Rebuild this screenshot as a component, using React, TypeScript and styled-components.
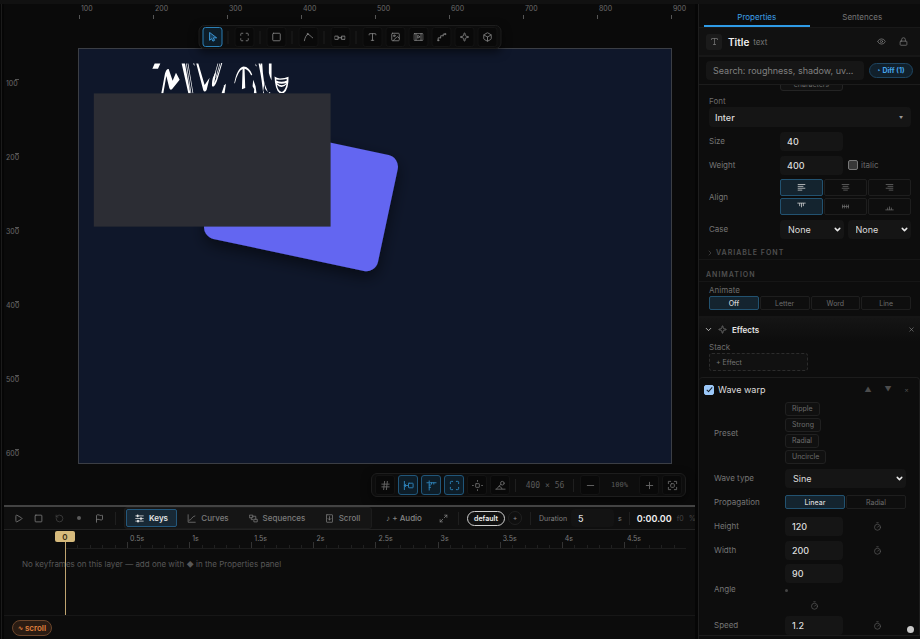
import React from "react";
import styled, { createGlobalStyle, css } from "styled-components";
import {
  Box, ChevronDown, ChevronRight, Eye, Flag, Hash, Image as ImageIcon, Lock, Maximize,
  Maximize2, Minus, Play, Plus, RotateCcw, Sparkle, Square, Timer, Type, X,
} from "lucide-react";

const Global = createGlobalStyle`
  *, *::before, *::after { box-sizing: border-box; }
  html, body { margin: 0; padding: 0; background: #080808; }
  body { font-family: Inter, "Liberation Sans", sans-serif; font-size: 9px; color: #6c6c6c; overflow: hidden; }
  button, input, select { font: inherit; color: inherit; margin: 0; }
  button { cursor: pointer; padding: 0; white-space: nowrap; }
  svg { display: block; flex: none; }
`;

/* ---------- frame ---------- */

const Shell = styled.div`
  display: grid;
  grid-template-columns: minmax(0, 1fr) 222px;
  grid-template-rows: minmax(0, 1fr);
  gap: 0 3px;
  height: 100vh;
  border-top: 4px solid #111;
  background: #060606;
`;

const Main = styled.main`
  display: grid;
  grid-template-rows: minmax(0, 1fr) 134px;
  min-width: 0;
  padding-left: 2px;
  margin-left: 1px;
  border-left: 1px solid #1b1b1b;
`;

const Workspace = styled.section`
  position: relative;
  display: grid;
  grid-template-columns: 75px minmax(0, 1fr) 24px;
  grid-template-rows: 45px minmax(0, 1fr);
  background: #0a0a0a;
`;

const TopRuler = styled.div`
  grid-column: 2;
  display: grid;
  grid-template-columns: repeat(8, minmax(0, 1fr)) 0;
  font-size: 7px;
  line-height: 9px;
  color: #6a6a6a;
`;

const TopMark = styled.span`
  white-space: nowrap;
  padding-left: 2px;
  height: 11px;
  &::after {
    content: "";
    display: block;
    width: 1px;
    height: 4px;
    margin: 2px 0 0 -2px;
    background: #555;
  }
`;

const SideRuler = styled.div`
  grid-column: 1;
  grid-row: 2;
  display: grid;
  grid-auto-rows: 74px;
  align-content: start;
  padding: 30px 0 0 2px;
  font-size: 7px;
  line-height: 8px;
  color: #6a6a6a;
`;

const SideMark = styled.span`
  width: 13px;
  &::before {
    content: "";
    display: block;
    width: 4px;
    height: 1px;
    margin: 0 0 0 9px;
    background: #555;
  }
`;

const Stage = styled.div`
  grid-column: 2;
  grid-row: 2;
  align-self: start;
  margin: -1px -1px 0;
  border: 1px solid #3b3e45;
  background: #0f172a;
  svg { width: 100%; height: auto; }
`;

/* ---------- floating toolbars ---------- */

const FloatBar = styled.div<{ $place: "top" | "bottom" }>`
  position: absolute;
  ${(p) => p.$place === "top"
    ? css`top: 21px; left: 50%; transform: translateX(-50%);`
    : css`bottom: 8px; right: 9px;`}
  display: flex;
  align-items: center;
  gap: 3px;
  padding: 1px 3px;
  border: 1px solid #1d1d1d;
  border-radius: 6px;
  background: #0d0d0d;
  box-shadow: 0 3px 10px rgba(0, 0, 0, 0.55);
`;

const Tool = styled.button<{ $on?: boolean; $dim?: boolean }>`
  display: grid;
  place-items: center;
  width: 20px;
  height: 20px;
  border: 1px solid ${(p) => (p.$on ? (p.$dim ? "#20567a" : "#2b7fb5") : "#131313")};
  border-radius: 3px;
  background: ${(p) => (p.$on ? "#0d1d28" : "#090909")};
  color: ${(p) => (p.$on ? (p.$dim ? "#2f86bd" : "#41a7ee") : p.$dim ? "#686868" : "#858585")};
`;

const Divider = styled.span<{ $m?: number }>`
  flex: none;
  width: 1px;
  height: 13px;
  margin: ${(p) => (p.$m === undefined ? "0 3px 0 2px" : `0 ${p.$m}px`)};
  background: #1f1f1f;
`;

const Readout = styled.span<{ $w: number; $s: number }>`
  width: ${(p) => p.$w}px;
  font: ${(p) => p.$s}px "DejaVu Sans Mono", monospace;
  text-align: center;
  white-space: nowrap;
  color: #5a5a5a;
`;

/* ---------- timeline ---------- */

const Timeline = styled.section`
  display: grid;
  grid-template-rows: 23px 19px minmax(0, 1fr) 24px;
  border-top: 2px solid #434343;
  background: #0c0c0c;
  overflow: hidden;
  position: relative;
`;

const Transport = styled.div`
  display: flex;
  align-items: center;
  background: #0f0f0f;
  border-bottom: 1px solid #222;
  overflow: hidden;
  white-space: nowrap;
  color: #7e7e7e;
`;

const Ghost = styled.button<{ $w: number; $faint?: boolean }>`
  display: flex;
  align-items: center;
  justify-content: center;
  flex: none;
  width: ${(p) => p.$w}px;
  height: 20px;
  border: 0;
  background: none;
  font-size: 8px;
  font-weight: 500;
  color: ${(p) => (p.$faint ? "#444" : "#858585")};
`;

const RecordDot = styled.span`
  width: 4px;
  height: 4px;
  border-radius: 2px;
  background: #5a5a5a;
`;

const ViewTabs = styled.div`
  display: flex;
  flex: none;
  margin-left: 5px;
  padding: 1px;
  border: 1px solid #1c1c1c;
  border-radius: 3px;
  background: #151515;
`;

const ViewTab = styled.button<{ $on?: boolean; $w: number }>`
  display: flex;
  align-items: center;
  justify-content: center;
  gap: 5px;
  width: ${(p) => p.$w}px;
  height: 18px;
  border: 1px solid ${(p) => (p.$on ? "#24587c" : "transparent")};
  border-radius: 2px;
  background: ${(p) => (p.$on ? "#182936" : "none")};
  color: ${(p) => (p.$on ? "#e4e4e4" : "#7c7c7c")};
  font-size: 8px;
  font-weight: ${(p) => (p.$on ? 600 : 500)};
`;

const Scene = styled.button`
  flex: none;
  width: 38px;
  height: 15px;
  border: 1px solid #cfcfcf;
  border-radius: 8px;
  background: #111;
  color: #f0f0f0;
  font-size: 7px;
  font-weight: 600;
`;

const AddScene = styled.button`
  flex: none;
  width: 14px;
  height: 14px;
  margin-left: 3px;
  border: 1px solid #202020;
  border-radius: 7px;
  background: none;
  color: #8a8a8a;
  font-size: 7px;
  line-height: 10px;
`;

const Duration = styled.label`
  display: flex;
  align-items: center;
  flex: none;
  gap: 4px;
  font-size: 7px;
  color: #808080;
`;

const DurationInput = styled.input`
  width: 43px;
  height: 18px;
  padding: 0 7px;
  border: 0;
  border-radius: 4px;
  background: #131313;
  color: #dedede;
  font-size: 9px;
  font-weight: 500;
`;

const Clock = styled.strong`
  padding-right: 5px;
  color: #f2f2f2;
  font-size: 9px;
  font-weight: 600;
`;

const Faint = styled.span`
  padding-right: 5px;
  font-size: 7px;
  color: #444;
  &:last-child { padding: 0; }
`;

const TimeRuler = styled.div`
  display: grid;
  grid-template-columns: repeat(10, minmax(0, 1fr));
  padding: 0 9px 0 61px;
  font-size: 7px;
  color: #7c7c7c;
`;

const TimeCell = styled.div`
  display: grid;
  grid-template-columns: repeat(5, minmax(0, 1fr));
  grid-template-rows: 12px 6px;
  border-bottom: 1px solid #1c1c1c;
`;

const TimeLabel = styled.span`
  grid-column: 1 / -1;
  padding-left: 3px;
  line-height: 18px;
`;

const Tick = styled.i<{ $major?: boolean }>`
  align-self: end;
  width: 1px;
  height: ${(p) => (p.$major ? 6 : 3)}px;
  background: ${(p) => (p.$major ? "#333" : "#202020")};
`;

const Empty = styled.p`
  margin: 0;
  padding: 8px 18px;
  font-size: 8px;
  line-height: 14px;
  color: #585858;
  small { font-size: 7px; }
`;

const Playhead = styled.div`
  position: absolute;
  top: 23px;
  bottom: 24px;
  left: 51px;
  width: 21px;
  display: flex;
  flex-direction: column;
  align-items: center;
  &::after {
    content: "";
    flex: 1;
    width: 1px;
    background: #bfa470;
  }
`;

const PlayheadTag = styled.span`
  align-self: flex-start;
  width: 20px;
  height: 11px;
  margin-top: 1px;
  border-radius: 2px;
  background: #d6ba7c;
  color: #3a2e14;
  font-size: 8px;
  font-weight: 600;
  line-height: 12px;
  text-align: center;
`;

const TimelineFoot = styled.div`
  display: flex;
  align-items: center;
  padding-left: 8px;
  border-top: 1px solid #171717;
`;

const ScrollPill = styled.button`
  display: flex;
  align-items: center;
  justify-content: center;
  gap: 2px;
  width: 40px;
  height: 16px;
  border: 1px solid #6b452b;
  border-radius: 8px;
  background: #2a1c13;
  color: #e0803e;
  font-size: 8px;
  font-weight: 600;
  span { font-size: 6px; }
`;

/* ---------- properties panel ---------- */

const Panel = styled.aside`
  display: grid;
  grid-template-columns: minmax(0, 1fr);
  grid-template-rows: 24px 29px 28px minmax(0, 1fr);
  min-width: 0;
  border-left: 1px solid #1e1e1e;
  background: #0d0d0d;
`;

const Tabs = styled.div`
  display: grid;
  grid-template-columns: 1fr 1fr;
  padding: 0 5px;
  border-bottom: 1px solid #191919;
  background: #0c0c0c;
`;

const Tab = styled.button<{ $on?: boolean }>`
  border: 0;
  border-bottom: 2px solid ${(p) => (p.$on ? "#2f9be6" : "transparent")};
  background: none;
  padding-top: 4px;
  font-size: 8px;
  color: ${(p) => (p.$on ? "#3ea0ea" : "#777")};
`;

const TitleRow = styled.header`
  display: flex;
  align-items: center;
  padding: 0 11px 0 7px;
  background: #111;
  border-bottom: 2px solid #171717;
`;

const TypeBadge = styled.span`
  display: grid;
  place-items: center;
  width: 16px;
  height: 16px;
  margin-right: 6px;
  border-radius: 3px;
  background: #1b1b1b;
  color: #777;
`;

const Title = styled.h1`
  margin: 0 4px 0 0;
  font-size: 10px;
  font-weight: 600;
  color: #f0f0f0;
`;

const Kind = styled.span`
  flex: 1;
  padding-top: 1px;
  font-size: 8px;
  color: #767676;
`;

const IconButton = styled.button`
  display: grid;
  place-items: center;
  width: 12px;
  height: 16px;
  margin-left: 10px;
  border: 0;
  background: none;
  color: #7a7a7a;
`;

const SearchRow = styled.div`
  display: flex;
  align-items: center;
  gap: 5px;
  padding: 0 7px;
  border-bottom: 1px solid #1c1c1c;
`;

const Search = styled.input`
  flex: 1;
  min-width: 0;
  height: 19px;
  padding: 0 7px;
  border: 0;
  border-radius: 4px;
  background: #161616;
  font-size: 9px;
  &::placeholder { color: #808080; opacity: 1; }
`;

const Diff = styled.button`
  width: 44px;
  height: 15px;
  border: 1px solid #1e4561;
  border-radius: 8px;
  background: #11202b;
  color: #45a5ec;
  font-size: 7px;
  font-weight: 700;
`;

const Body = styled.div`
  overflow: hidden;
`;

const Group = styled.section<{ $pad?: string }>`
  display: grid;
  grid-template-columns: minmax(0, 1fr);
  gap: 4px;
  padding: ${(p) => p.$pad ?? "0 9px 0 10px"};
`;

const Row = styled.div<{ $h?: number }>`
  display: grid;
  grid-template-columns: 71px minmax(0, 1fr);
  align-items: center;
  height: ${(p) => p.$h ?? 20}px;
`;

const Name = styled.label`
  font-size: 8px;
  color: #757575;
`;

const Caption = styled.label`
  display: block;
  font-size: 8px;
  line-height: 12px;
  color: #6c6c6c;
`;

const Inline = styled.div<{ $gap?: number }>`
  display: flex;
  align-items: center;
  gap: ${(p) => p.$gap ?? 4}px;
`;

const Field = styled.input<{ $w: number }>`
  width: ${(p) => p.$w}px;
  height: 19px;
  padding: 0 7px;
  border: 0;
  border-radius: 4px;
  background: #151515;
  color: #dcdcdc;
  font-size: 9px;
  font-weight: 500;
`;

const SelectWrap = styled.span`
  display: grid;
  flex: 1;
  grid-template-columns: minmax(0, 1fr);
  align-items: center;
  > * { grid-area: 1 / 1; }
  > svg { justify-self: end; margin-right: 2px; pointer-events: none; color: #e8e8e8; }
`;

const Select = styled.select`
  appearance: none;
  width: 100%;
  height: 19px;
  padding: 0 8px;
  border: 0;
  border-radius: 4px;
  background: #151515;
  color: #dcdcdc;
  font-size: 9px;
`;

const FontButton = styled.button`
  display: flex;
  align-items: center;
  justify-content: space-between;
  width: 100%;
  height: 20px;
  padding: 0 8px 0 6px;
  border: 0;
  border-radius: 4px;
  background: #151515;
  color: #dcdcdc;
  font-size: 9px;
  font-weight: 500;
  small { font-size: 4px; color: #999; }
`;

const Check = styled.input`
  appearance: none;
  display: grid;
  place-items: center;
  width: 10px;
  height: 10px;
  border: 1px solid #777;
  border-radius: 2px;
  background: #383838;
  &:checked {
    border-color: #9cc8f8;
    background: #9cc8f8;
  }
  &:checked::after {
    content: "";
    width: 3px;
    height: 6px;
    margin-top: -1px;
    border: solid #16202a;
    border-width: 0 1px 1px 0;
    transform: rotate(42deg);
  }
`;

const CheckLabel = styled.label<{ $strong?: boolean }>`
  display: flex;
  align-items: center;
  gap: ${(p) => (p.$strong ? 4 : 3)}px;
  font-size: ${(p) => (p.$strong ? 9 : 8)}px;
  color: ${(p) => (p.$strong ? "#dedede" : "#6a6a6a")};
`;

const Segments = styled.div<{ $n: number }>`
  display: grid;
  grid-template-columns: repeat(${(p) => p.$n}, minmax(0, 1fr));
  gap: 2px 1px;
`;

const Segment = styled.button<{ $on?: boolean; $h: number }>`
  display: grid;
  place-items: center;
  height: ${(p) => p.$h}px;
  border: 1px solid ${(p) => (p.$on ? "#225270" : "#1e1e1e")};
  border-radius: 2px;
  background: ${(p) => (p.$on ? "#14242f" : "#0e0e0e")};
  color: ${(p) => (p.$on ? "#d8d8d8" : "#6c6c6c")};
  font-size: 7px;
  font-weight: ${(p) => (p.$on ? 500 : 400)};
`;

const MoreButton = styled.button`
  width: 63px;
  height: 18px;
  margin: -12px 0 0 71px;
  padding-top: 5px;
  border: 1px solid #242424;
  border-radius: 3px;
  background: #111;
  font-size: 7px;
  line-height: 10px;
  color: #6a6a6a;
`;

const SubHead = styled.h2<{ $h: number }>`
  display: flex;
  align-items: center;
  gap: 2px;
  height: ${(p) => p.$h}px;
  margin: 0;
  padding: 7px 7px 0;
  border-bottom: 1px solid #161616;
  font-size: 7px;
  font-weight: 600;
  letter-spacing: 1px;
  text-transform: uppercase;
  color: #505050;
`;

const EffectsHead = styled.h2`
  display: flex;
  align-items: center;
  gap: 5px;
  height: 25px;
  margin: 6px 0 0;
  padding: 0 5px;
  border-top: 2px solid #161616;
  background: linear-gradient(#151515, #0d0d0d);
  font-size: 8px;
  font-weight: 600;
  color: #e8e8e8;
  span { flex: 1; }
`;

const AddEffect = styled.button`
  display: block;
  width: 99px;
  height: 18px;
  padding: 0 6px;
  border: 1px dashed #2c2c2c;
  border-radius: 3px;
  background: #111;
  color: #747474;
  font-size: 7px;
  text-align: left;
`;

const Card = styled.section`
  margin-top: 6px;
  border: 1px solid #1c1c1c;
  border-left: 0;
  border-radius: 4px 4px 0 0;
`;

const CardHead = styled.header`
  display: flex;
  align-items: center;
  height: 23px;
  padding: 0 4px 0 5px;
  ${CheckLabel} { flex: 1; }
`;

const Tiny = styled.button`
  width: 20px;
  border: 0;
  background: none;
  color: #4c4c4c;
  font-size: 7px;
  &:last-child { width: 17px; }
`;

const Presets = styled.div`
  display: flex;
  flex-direction: column;
  align-items: flex-start;
  gap: 2px;
`;

const Preset = styled.button`
  height: 14px;
  padding: 0 6px;
  border: 1px solid #202020;
  border-radius: 3px;
  background: #101010;
  color: #6c6c6c;
  font-size: 7px;
`;

const Timed = styled.div`
  display: grid;
  grid-template-columns: 58px minmax(0, 1fr);
  align-items: center;
  button { justify-self: center; margin: 0 0 0 5px; color: #555; }
`;

const AngleStack = styled.div`
  display: grid;
  gap: 5px;
  align-content: start;
  &::before { content: ""; order: 1; width: 3px; height: 3px; border-radius: 2px; background: #444; margin-top: 1px; }
  button { order: 2; margin: 0 0 0 23px; color: #555; }
`;

const Knob = styled.span`
  position: fixed;
  right: 6px;
  bottom: 6px;
  width: 7px;
  height: 7px;
  border-radius: 4px;
  background: #c9c9c9;
`;

/* ---------- icons ---------- */

const Svg = ({ s = 10, w = 2, children }: { s?: number; w?: number; children: React.ReactNode }) => (
  <svg width={s} height={s} viewBox="0 0 24 24" fill="none" stroke="currentColor" strokeWidth={w}
    strokeLinecap="round" strokeLinejoin="round" aria-hidden>{children}</svg>
);

const Cursor = () => <Svg><path d="M5 2v18l5-4 3 6 4-2-3-6h7z" fill="currentColor" fillOpacity="0.25" /></Svg>;
const Pen = () => <Svg><path d="M2 21C4 12 7 7 10 5M10 5c4 1 7 5 12 9" /><circle cx="10" cy="5" r="1.500" /></Svg>;
const Link = () => <Svg s={11}><rect x="1" y="9" width="7" height="7" /><rect x="16" y="9" width="7" height="7" /><path d="M8 12.500h8" /></Svg>;
const FilmStrip = () => <Svg><rect x="1" y="4" width="22" height="16" rx="1" /><path d="M6 4v16M18 4v16" /><path d="M10 9v6l5-3z" /></Svg>;
const Steps = () => <Svg><path d="M4 19v-5h6M10 14V9h6M16 9V5h4" /><circle cx="4" cy="20" r="1.500" /><circle cx="21" cy="5" r="1.500" /></Svg>;
const Snap = () => <Svg s={11}><path d="M3 3v18M3 12h7" /><rect x="12" y="7" width="10" height="10" rx="1" /><path d="M6 9l-3 3 3 3" /></Svg>;
const Rulers = () => <Svg s={11}><path d="M7 22V6h15M2 6h5V2M7 11h3M7 16h3M12 6v3M17 6v3" /></Svg>;
const Nudge = () => <Svg s={11}><rect x="8" y="8" width="8" height="8" rx="1" /><path d="M12 1v2M12 21v2M1 12h2M21 12h2" /></Svg>;
const Angle = () => <Svg s={11}><path d="M2 20h20M3 20L13 9" /><circle cx="16" cy="7" r="4" /><path d="M9 14c3 0 5 2 6 5" /></Svg>;
const Fit = () => <Svg s={11}><path d="M3 8V3h5M16 3h5v5M21 16v5h-5M8 21H3v-5" /><rect x="8" y="8" width="8" height="8" rx="2" /></Svg>;
const KeysIcon = () => <Svg s={9} w={2}><path d="M2 5h20M2 12h20M2 19h20" /><path d="M7 4v2M16 11v2M8 18v2" strokeWidth="5" /></Svg>;
const CurvesIcon = () => <Svg s={9}><path d="M3 2v20h19M6 17c6 0 7-11 15-12" /></Svg>;
const SeqIcon = () => <Svg s={9}><rect x="2" y="3" width="8" height="7" /><rect x="14" y="14" width="8" height="7" /><path d="M10 6h8v8M6 10v5h4" /></Svg>;
const ScrollIcon = () => <Svg s={9}><rect x="4" y="2" width="16" height="20" rx="1" /><path d="M12 7v9M8 12l4 4 4-4" /></Svg>;

const HLines = ({ align }: { align: "left" | "center" | "right" }) => (
  <Svg s={9} w={2}>
    {[18, 13, 18, 10].map((w, i) => {
      const x = align === "left" ? 3 : align === "right" ? 21 - w : 12 - w / 2;
      return <path key={i} d={`M${x} ${4 + i * 5}h${w}`} />;
    })}
  </Svg>
);
const VLines = ({ at }: { at: "top" | "mid" | "base" }) => (
  <Svg s={9} w={2}>
    {at === "top" && <path d="M2 3h20M7 4v6M12 4v9M17 4v6" />}
    {at === "mid" && <path d="M4 12h16M4 8v8M9 8v8M15 8v8M20 8v8" />}
    {at === "base" && <path d="M2 21h20M7 16v4M12 13v7M17 16v4" />}
  </Svg>
);

/* ---------- canvas artwork ---------- */

const Artwork = () => (
  <svg viewBox="0 0 800 560" role="img" aria-label="Canvas">
    <defs>
      <filter id="drop" x="-20%" y="-20%" width="140%" height="150%">
        <feDropShadow dx="0" dy="8" stdDeviation="10" floodColor="#000" floodOpacity="0.5" />
      </filter>
    </defs>
    <g filter="url(#drop)">
      <rect x="180" y="120" width="240" height="160" rx="16" fill="#6366f1" transform="rotate(12 300 200)" />
    </g>
    <g transform="translate(1 1) scale(.45)" fill="#fff">
      <path d="M225 41h17l-7 16h-17z" />
      <path d="M245 131l11-60q5-15 11-13l12 35 10-24 11 21-23 29q-6 3-8-4l-9-36-9 52z" />
      <path d="M306 41h10l16 90h-6zM319 41h2l14 90h-2zM324 41h2l15 90h-2zM340 41h4l1 8z" />
      <path d="M350 41h6l19 65 15-22-9 37q-6 9-10 1z" />
      <path d="M397 104q0-22 13-39l-6 36 12-31 9-30h3l-12 41q-8 29-16 30-4 0-3-7z" />
      <path d="M414 41h2l-12 42h-2zM420 41h2l-12 43h-2z" />
      <path d="M426 131l8-24 5-5-4 29z" />
      <path d="M464 101q8-47 28-51 17 1 26 24l-3 3q-9-18-20-20l2 58-10 4 2-61q-14 5-23 43z" />
      <path d="M521 90l7 20 3 21h-8l1-12-5-9zM528 41l4 9-4-2zM537 41h4l13 67-3 7zM543 41h5l2 28 4 32-3 22 3 8h-3l-5-40-5-30zM568 41h8v51l-5-12-3-10z" />
      <path d="M553 92l4 15 8 21-8-10zM568 128h4v3h-4z" />
      <path d="M585 80q6 5 16 6 15 0 26-5 1 37-14 49h-13q-14-12-15-50zm5 12q16 9 32 0l-1-4q-15 4-31 1zm2 13q4 20 15 22 10-4 14-23-14 16-29 1zm0-5q15 14 29 0-15 5-29 0z" fillRule="evenodd" />
    </g>
    <rect x="20" y="60" width="320" height="180" fill="#2c2d34" />
  </svg>
);

const Watch = () => <IconButton aria-label="Animate value"><Timer size={9} /></IconButton>;

const times = ["", "0.5s", "1s", "1.5s", "2s", "2.5s", "3s", "3.5s", "4s", "4.5s"];

export default function App() {
  return (
    <Shell>
      <Global />
      <Main>
        <Workspace>
          <TopRuler>{[100, 200, 300, 400, 500, 600, 700, 800, 900].map((n) => <TopMark key={n}>{n}</TopMark>)}</TopRuler>
          <SideRuler>{[100, 200, 300, 400, 500, 600].map((n) => <SideMark key={n}>{n}</SideMark>)}</SideRuler>
          <Stage><Artwork /></Stage>
          <FloatBar $place="top">
            <Tool $on aria-label="Select"><Cursor /></Tool><Divider />
            <Tool aria-label="Frame"><Maximize size={10} /></Tool><Divider />
            <Tool aria-label="Rectangle"><Square size={10} /></Tool><Divider />
            <Tool aria-label="Pen"><Pen /></Tool><Divider />
            <Tool aria-label="Connector"><Link /></Tool><Divider />
            <Tool aria-label="Text"><Type size={10} /></Tool>
            <Tool aria-label="Image"><ImageIcon size={10} /></Tool>
            <Tool aria-label="Video"><FilmStrip /></Tool>
            <Tool aria-label="Path steps"><Steps /></Tool>
            <Tool aria-label="Particles"><Sparkle size={10} /></Tool>
            <Tool aria-label="3D object"><Box size={10} /></Tool>
          </FloatBar>
          <FloatBar $place="bottom">
            <Tool $dim aria-label="Grid"><Hash size={11} /></Tool>
            <Tool $on $dim aria-label="Snap"><Snap /></Tool>
            <Tool $on $dim aria-label="Rulers"><Rulers /></Tool>
            <Tool $on $dim aria-label="Bounds"><Maximize size={11} /></Tool>
            <Tool $dim aria-label="Nudge"><Nudge /></Tool>
            <Tool $dim aria-label="Angle"><Angle /></Tool>
            <Divider />
            <Readout $w={46} $s={8}>400 × 56</Readout>
            <Divider />
            <Tool $dim aria-label="Zoom out"><Minus size={11} /></Tool>
            <Readout $w={33} $s={7}>100%</Readout>
            <Tool $dim aria-label="Zoom in"><Plus size={11} /></Tool>
            <Tool $dim aria-label="Fit"><Fit /></Tool>
          </FloatBar>
        </Workspace>

        <Timeline>
          <Transport>
            <Ghost $w={28} aria-label="Play"><Play size={9} /></Ghost>
            <Ghost $w={13} aria-label="Stop"><Square size={9} /></Ghost>
            <Ghost $w={28} $faint aria-label="Loop"><RotateCcw size={9} /></Ghost>
            <Ghost $w={12} $faint aria-label="Record"><RecordDot /></Ghost>
            <Ghost $w={28} aria-label="Marker"><Flag size={9} /></Ghost>
            <Divider />
            <ViewTabs>
              <ViewTab $on $w={51}><KeysIcon />Keys</ViewTab>
              <ViewTab $w={62}><CurvesIcon />Curves</ViewTab>
              <ViewTab $w={76}><SeqIcon />Sequences</ViewTab>
              <ViewTab $w={55}><ScrollIcon />Scroll</ViewTab>
            </ViewTabs>
            <Ghost $w={64}>♪ + Audio</Ghost>
            <Ghost $w={14} aria-label="Expand"><Maximize2 size={9} /></Ghost>
            <Divider $m={8} />
            <Scene>default</Scene>
            <AddScene aria-label="Add scene">+</AddScene>
            <Divider $m={8} />
            <Duration>Duration<DurationInput defaultValue="5" />s</Duration>
            <Divider $m={7} />
            <Clock>0:00.00</Clock>
            <Faint>f0</Faint>
            <Faint>%</Faint>
          </Transport>
          <TimeRuler>
            {times.map((t, i) => (
              <TimeCell key={i}>
                <TimeLabel>{t}</TimeLabel>
                {[0, 1, 2, 3, 4].map((k) => <Tick key={k} $major={k === 0} />)}
              </TimeCell>
            ))}
          </TimeRuler>
          <Empty>No keyframes on this layer — add one with <small>◆</small> in the Properties panel</Empty>
          <TimelineFoot><ScrollPill><span>∿</span>scroll</ScrollPill></TimelineFoot>
          <Playhead><PlayheadTag>0</PlayheadTag></Playhead>
        </Timeline>
      </Main>

      <Panel>
        <Tabs><Tab $on>Properties</Tab><Tab>Sentences</Tab></Tabs>
        <TitleRow>
          <TypeBadge><Type size={9} /></TypeBadge>
          <Title>Title</Title><Kind>text</Kind>
          <IconButton aria-label="Visibility"><Eye size={9} /></IconButton>
          <IconButton aria-label="Lock"><Lock size={9} /></IconButton>
        </TitleRow>
        <SearchRow>
          <Search aria-label="Search properties" placeholder="Search: roughness, shadow, uv..." />
          <Diff>‣ Diff (1)</Diff>
        </SearchRow>
        <Body>
          <Group>
            <MoreButton>characters</MoreButton>
            <div>
              <Caption htmlFor="font">Font</Caption>
              <FontButton id="font">Inter<small>▼</small></FontButton>
            </div>
            <Row><Name htmlFor="size">Size</Name><Field id="size" $w={63} defaultValue="40" /></Row>
            <Row>
              <Name htmlFor="weight">Weight</Name>
              <Inline $gap={5}>
                <Field id="weight" $w={63} defaultValue="400" />
                <CheckLabel><Check type="checkbox" />italic</CheckLabel>
              </Inline>
            </Row>
            <Row $h={36}>
              <Name as="span">Align</Name>
              <Segments $n={3}>
                <Segment $on $h={17} aria-label="Left"><HLines align="left" /></Segment>
                <Segment $h={17} aria-label="Center"><HLines align="center" /></Segment>
                <Segment $h={17} aria-label="Right"><HLines align="right" /></Segment>
                <Segment $on $h={17} aria-label="Top"><VLines at="top" /></Segment>
                <Segment $h={17} aria-label="Middle"><VLines at="mid" /></Segment>
                <Segment $h={17} aria-label="Bottom"><VLines at="base" /></Segment>
              </Segments>
            </Row>
            <Row>
              <Name htmlFor="case">Case</Name>
              <Inline>
                <SelectWrap><Select id="case"><option>None</option></Select><ChevronDown size={9} strokeWidth={4} /></SelectWrap>
                <SelectWrap><Select aria-label="Decoration"><option>None</option></Select><ChevronDown size={9} strokeWidth={4} /></SelectWrap>
              </Inline>
            </Row>
          </Group>
          <SubHead $h={21}><ChevronRight size={8} />Variable font</SubHead>
          <SubHead $h={22}>Animation</SubHead>
          <Group $pad="2px 9px 0 10px">
            <div>
              <Caption as="span">Animate</Caption>
              <Segments $n={4}>
                <Segment $on $h={14}>Off</Segment>
                <Segment $h={14}>Letter</Segment>
                <Segment $h={14}>Word</Segment>
                <Segment $h={14}>Line</Segment>
              </Segments>
            </div>
          </Group>
          <EffectsHead>
            <ChevronDown size={9} /><Sparkle size={9} color="#777" /><span>Effects</span><X size={7} color="#888" />
          </EffectsHead>
          <Group>
            <div><Caption as="span">Stack</Caption><AddEffect>+ Effect</AddEffect></div>
          </Group>
          <Card>
            <CardHead>
              <CheckLabel $strong><Check type="checkbox" defaultChecked />Wave warp</CheckLabel>
              <Tiny aria-label="Move up">▲</Tiny><Tiny aria-label="Move down">▼</Tiny><Tiny aria-label="Remove">×</Tiny>
            </CardHead>
            <Group $pad="0 13px 0 15px">
              <Row $h={63}>
                <Name as="span">Preset</Name>
                <Presets><Preset>Ripple</Preset><Preset>Strong</Preset><Preset>Radial</Preset><Preset>Uncircle</Preset></Presets>
              </Row>
              <Row>
                <Name htmlFor="wave">Wave type</Name>
                <SelectWrap><Select id="wave"><option>Sine</option></Select><ChevronDown size={9} strokeWidth={4} /></SelectWrap>
              </Row>
              <Row>
                <Name as="span">Propagation</Name>
                <Segments $n={2}><Segment $on $h={14}>Linear</Segment><Segment $h={14}>Radial</Segment></Segments>
              </Row>
              <Row><Name htmlFor="h">Height</Name><Timed><Field id="h" $w={58} defaultValue="120" /><Watch /></Timed></Row>
              <Row><Name htmlFor="w">Width</Name><Timed><Field id="w" $w={58} defaultValue="200" /><Watch /></Timed></Row>
              <Row $h={47}><Name htmlFor="a">Angle</Name><AngleStack><Field id="a" $w={58} defaultValue="90" /><Watch /></AngleStack></Row>
              <Row><Name htmlFor="s">Speed</Name><Timed><Field id="s" $w={58} defaultValue="1.2" /><Watch /></Timed></Row>
            </Group>
          </Card>
        </Body>
      </Panel>
      <Knob />
    </Shell>
  );
}
